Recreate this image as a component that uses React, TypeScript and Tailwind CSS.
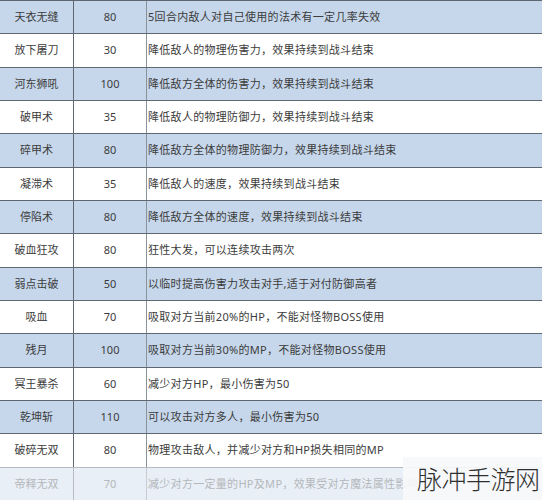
import React from "react";

const rows: [string, string, string][] = [
  ["天衣无缝", "80", "5回合内敌人对自己使用的法术有一定几率失效"],
  ["放下屠刀", "30", "降低敌人的物理伤害力，效果持续到战斗结束"],
  ["河东狮吼", "100", "降低敌方全体的伤害力，效果持续到战斗结束"],
  ["破甲术", "35", "降低敌人的物理防御力，效果持续到战斗结束"],
  ["碎甲术", "80", "降低敌方全体的物理防御力，效果持续到战斗结束"],
  ["凝滞术", "35", "降低敌人的速度，效果持续到战斗结束"],
  ["停陷术", "80", "降低敌方全体的速度，效果持续到战斗结束"],
  ["破血狂攻", "80", "狂性大发，可以连续攻击两次"],
  ["弱点击破", "50", "以临时提高伤害力攻击对手,适于对付防御高者"],
  ["吸血", "70", "吸取对方当前20%的HP，不能对怪物BOSS使用"],
  ["残月", "100", "吸取对方当前30%的MP，不能对怪物BOSS使用"],
  ["冥王暴杀", "60", "减少对方HP，最小伤害为50"],
  ["乾坤斩", "110", "可以攻击对方多人，最小伤害为50"],
  ["破碎无双", "80", "物理攻击敌人，并减少对方和HP损失相同的MP"],
  ["帝释无双", "70", "减少对方一定量的HP及MP，效果受对方魔法属性影响"],
];

export default function App() {
  return (
    <div
      className="relative w-[542px] h-[500px] overflow-hidden bg-white text-[11px] text-[#3a3a3a]"
      style={{ fontFamily: '"Noto Sans", "Noto Sans CJK SC", sans-serif' }}
    >
      <div className="flex flex-col h-[500px]">
        {rows.map((r, i) => {
          const blue = i % 2 === 0;
          const last = i === rows.length - 1;
          const bg = last ? "bg-[#e9eff7]" : blue ? "bg-[#c6d7eb]" : "bg-white";
          const line = last ? "border-[#b7bcc3]" : "border-[#5f6770]";
          const txt = last ? "text-[#b4b7bb]" : "text-[#3c3c3c]";
          return (
            <div
              key={i}
              className={`flex-1 grid grid-cols-[73px_73px_1fr] border-t ${line} ${bg} ${txt}`}
            >
              <div className="flex items-center justify-center">{r[0]}</div>
              <div className={`flex items-center justify-center border-l ${line}`}>{r[1]}</div>
              <div className={`flex items-center pl-[1px] border-l tracking-[0.3px] ${last ? "border-[#c8ccd2]" : "border-[#8a929b]"} whitespace-nowrap`}>
                {r[2]}
              </div>
            </div>
          );
        })}
      </div>
      <div className="absolute left-[403px] top-[457px] w-[139px] h-[43px] bg-[#f7f8f9]/90 flex items-center pl-[14px]">
        <span
          className="text-[25px] font-light leading-none text-[#2f2f2f] whitespace-nowrap tracking-[-0.5px]"
          style={{ fontFamily: '"Noto Sans CJK SC", sans-serif' }}
        >
          脉冲手游网
        </span>
      </div>
    </div>
  );
}
